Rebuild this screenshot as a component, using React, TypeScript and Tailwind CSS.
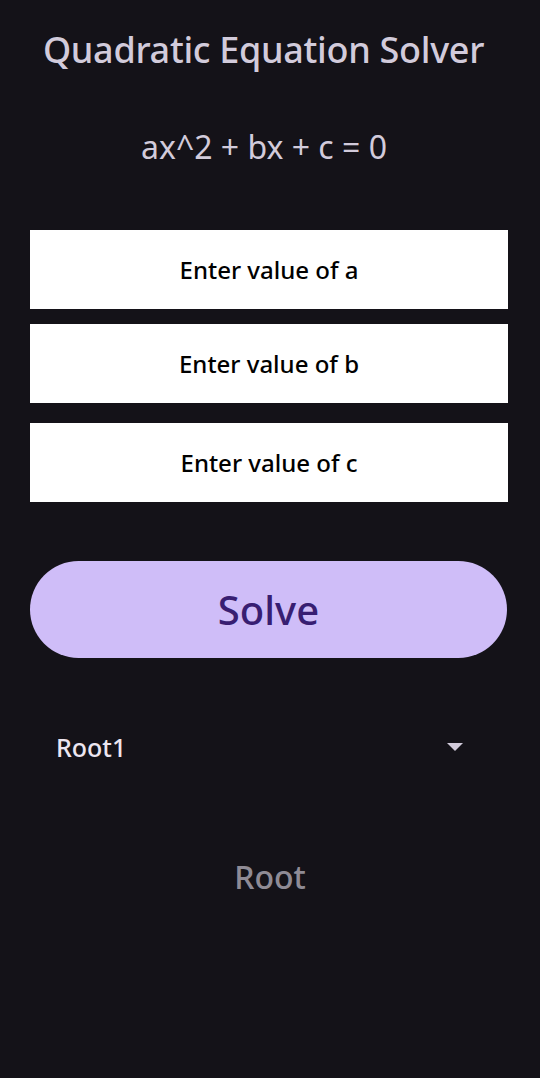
export default function App() {
  return (
    <div
      className="min-h-[1078px] w-[540px] bg-[#141218] flex flex-col"
      style={{ fontFamily: '"Noto Sans", "Open Sans", sans-serif' }}
    >
      <h1 className="mt-[26px] pr-[13px] text-center text-[36px] leading-[48px] font-medium tracking-[-0.3px] text-[#d2cbdb]">
        Quadratic Equation Solver
      </h1>
      <p className="mt-[53px] pr-[12px] text-center text-[32px] leading-[40px] text-[#d2cbdb]">
        ax^2 + bx + c = 0
      </p>

      <div className="mt-[63px] mx-[30px] flex flex-col">
        <input
          placeholder="Enter value of a"
          className="h-[79px] w-[478px] bg-white text-center text-[24px] font-medium text-black placeholder:text-black outline-none"
        />
        <input
          placeholder="Enter value of b"
          className="mt-[15px] h-[79px] w-[478px] bg-white text-center text-[24px] font-medium text-black placeholder:text-black outline-none"
        />
        <input
          placeholder="Enter value of c"
          className="mt-[20px] h-[79px] w-[478px] bg-white text-center text-[24px] font-medium text-black placeholder:text-black outline-none"
        />
      </div>

      <button className="mt-[59px] mx-[30px] h-[97px] w-[477px] rounded-full bg-[#cfbdf8] text-[40px] font-medium text-[#381e72]">
        Solve
      </button>

      <div className="mt-[73px] ml-[56px] mr-[77px] flex items-center justify-between">
        <span className="text-[25px] leading-[32px] font-medium text-[#ece6f0]">Root1</span>
        <svg width="16" height="9" viewBox="0 0 16 9">
          <path d="M0 0 L16 0 L8 8 Z" fill="#d2cbdb" />
        </svg>
      </div>

      <p className="mt-[94px] text-center text-[32px] leading-[40px] font-medium text-[#8f8b95]">Root</p>
    </div>
  )
}
